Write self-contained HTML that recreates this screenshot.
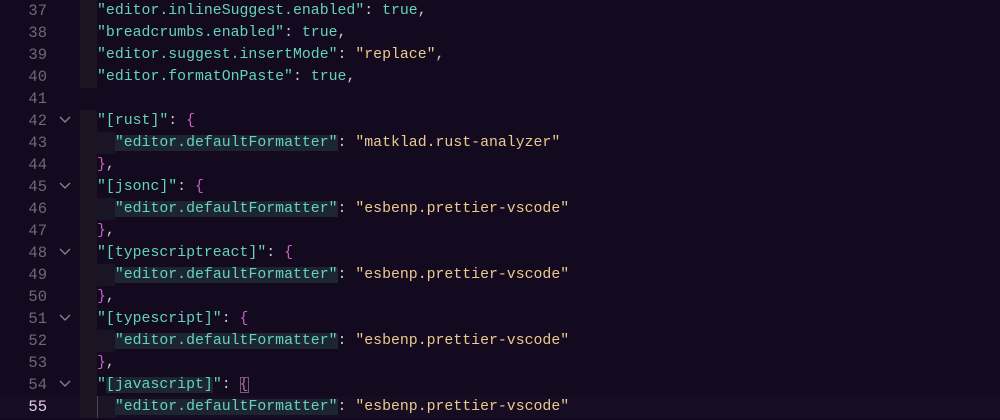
<!DOCTYPE html>
<html><head><meta charset="utf-8"><style>
body{margin:0;width:1000px;height:420px;background:#130a1f;overflow:hidden;font-family:"Liberation Mono",monospace;font-size:14.85px;}
.l{position:absolute;left:0;height:22px;line-height:22px;width:1000px;white-space:pre;}
.n{position:absolute;right:953px;color:#6f6878;font-size:15.5px;}
.c{position:absolute;left:97px;}
.band{position:absolute;left:80px;width:17px;height:22px;background:#1d1422;}
.band2{position:absolute;left:97px;width:18px;height:22px;background:#1a1525;}
.chev{position:absolute;left:59px;top:6px;width:12px;height:8px;}
.k{color:#63d3bd}.s{color:#ecc98e}.p{color:#cfc7d4}.b{color:#c95fc0}.t{color:#63d3bd}
.hl{background:#1e2532}
.cur .n{color:#e4c7e6}
</style></head><body>
<div class="l" style="top:0"><div class="band"></div><span class="n">37</span><span class="c"><span class="k">"editor.inlineSuggest.enabled"</span><span class="p">: </span><span class="t">true</span><span class="p">,</span></span></div>
<div class="l" style="top:22px"><div class="band"></div><span class="n">38</span><span class="c"><span class="k">"breadcrumbs.enabled"</span><span class="p">: </span><span class="t">true</span><span class="p">,</span></span></div>
<div class="l" style="top:44px"><div class="band"></div><span class="n">39</span><span class="c"><span class="k">"editor.suggest.insertMode"</span><span class="p">: </span><span class="s">"replace"</span><span class="p">,</span></span></div>
<div class="l" style="top:66px"><div class="band"></div><span class="n">40</span><span class="c"><span class="k">"editor.formatOnPaste"</span><span class="p">: </span><span class="t">true</span><span class="p">,</span></span></div>
<div class="l" style="top:88px"><span class="n">41</span></div>
<div class="l" style="top:110px"><div class="band"></div><span class="n">42</span><svg class="chev" viewBox="0 0 12 8"><path d="M1 1L6 6L11 1" stroke="#8a8494" stroke-width="1.3" fill="none"/></svg><span class="c"><span class="k">"[rust]"</span><span class="p">: </span><span class="b">{</span></span></div>
<div class="l" style="top:132px"><div class="band"></div><div class="band2"></div><span class="n">43</span><span class="c">  <span class="k hl">"editor.defaultFormatter"</span><span class="p">: </span><span class="s">"matklad.rust-analyzer"</span></span></div>
<div class="l" style="top:154px"><div class="band"></div><span class="n">44</span><span class="c"><span class="b">}</span><span class="p">,</span></span></div>
<div class="l" style="top:176px"><div class="band"></div><span class="n">45</span><svg class="chev" viewBox="0 0 12 8"><path d="M1 1L6 6L11 1" stroke="#8a8494" stroke-width="1.3" fill="none"/></svg><span class="c"><span class="k">"[jsonc]"</span><span class="p">: </span><span class="b">{</span></span></div>
<div class="l" style="top:198px"><div class="band"></div><div class="band2"></div><span class="n">46</span><span class="c">  <span class="k hl">"editor.defaultFormatter"</span><span class="p">: </span><span class="s">"esbenp.prettier-vscode"</span></span></div>
<div class="l" style="top:220px"><div class="band"></div><span class="n">47</span><span class="c"><span class="b">}</span><span class="p">,</span></span></div>
<div class="l" style="top:242px"><div class="band"></div><span class="n">48</span><svg class="chev" viewBox="0 0 12 8"><path d="M1 1L6 6L11 1" stroke="#8a8494" stroke-width="1.3" fill="none"/></svg><span class="c"><span class="k">"[typescriptreact]"</span><span class="p">: </span><span class="b">{</span></span></div>
<div class="l" style="top:264px"><div class="band"></div><div class="band2"></div><span class="n">49</span><span class="c">  <span class="k hl">"editor.defaultFormatter"</span><span class="p">: </span><span class="s">"esbenp.prettier-vscode"</span></span></div>
<div class="l" style="top:286px"><div class="band"></div><span class="n">50</span><span class="c"><span class="b">}</span><span class="p">,</span></span></div>
<div class="l" style="top:308px"><div class="band"></div><span class="n">51</span><svg class="chev" viewBox="0 0 12 8"><path d="M1 1L6 6L11 1" stroke="#8a8494" stroke-width="1.3" fill="none"/></svg><span class="c"><span class="k">"[typescript]"</span><span class="p">: </span><span class="b">{</span></span></div>
<div class="l" style="top:330px"><div class="band"></div><div class="band2"></div><span class="n">52</span><span class="c">  <span class="k hl">"editor.defaultFormatter"</span><span class="p">: </span><span class="s">"esbenp.prettier-vscode"</span></span></div>
<div class="l" style="top:352px"><div class="band"></div><span class="n">53</span><span class="c"><span class="b">}</span><span class="p">,</span></span></div>
<div class="l" style="top:374px"><div class="band"></div><span class="n">54</span><svg class="chev" viewBox="0 0 12 8"><path d="M1 1L6 6L11 1" stroke="#8a8494" stroke-width="1.3" fill="none"/></svg><span class="c"><span class="k">"<span class="hl">[javascript]</span>"</span><span class="p">: </span><span class="b" style="outline:1px solid #6a6470;outline-offset:-1px">{</span></span></div>
<div class="l cur" style="top:396px;background:#160d22"><div class="band"></div><div class="band2" style="border-left:1px solid #4a4450"></div><span class="n">55</span><span class="c">  <span class="k hl">"editor.defaultFormatter"</span><span class="p">: </span><span class="s">"esbenp.prettier-vscode"</span></span></div>
</body></html>
